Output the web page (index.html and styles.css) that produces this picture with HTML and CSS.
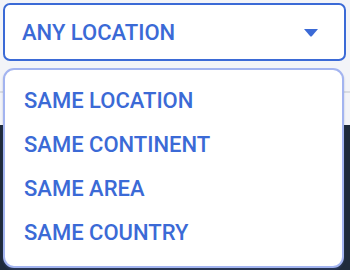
FILE: index.html
```html
<!DOCTYPE html>
<html lang="en">
<head>
    <meta charset="UTF-8">
    <meta name="viewport" content="width=device-width, initial-scale=1.0">
    <title>Location Filter</title>
    <link rel="stylesheet" href="styles.css">
</head>
<body>

    <div class="filter-wrap">
        <!-- Select trigger -->
        <button class="select-box">
            <span class="select-label">ANY LOCATION</span>
            <svg class="select-caret" width="14" height="8" viewBox="0 0 14 8">
                <path d="M0 0 H14 L7.8 7.2 Q7 8 6.2 7.2 Z" fill="#3b6ad6"/>
            </svg>
        </button>

        <!-- Options -->
        <ul class="option-list">
            <li class="option-item">SAME LOCATION</li>
            <li class="option-item">SAME CONTINENT</li>
            <li class="option-item">SAME AREA</li>
            <li class="option-item">SAME COUNTRY</li>
        </ul>
    </div>

</body>
</html>
```
FILE: styles.css
```css
/* Page backdrop behind the dropdown */
body {
    margin: 0;
    font-family: Roboto, "Liberation Sans", Arial, sans-serif;
    background: linear-gradient(#f3f4f8 0 91px, #d9dce2 91px 93px, #f3f4f8 93px 125px, #1f2b3b 125px);
    min-height: 270px;
}

.filter-wrap {
    padding: 3px 4px 0 3px;
}

.select-box {
    width: 100%;
    height: 58px;
    display: flex;
    align-items: center;
    justify-content: space-between;
    padding: 0 26px 0 17px;
    background: #fff;
    border: 2px solid #3b6ad6;
    border-radius: 7px;
    font-family: inherit;
    cursor: pointer;
    box-sizing: border-box;
}

.select-label {
    font-size: 22px;
    font-weight: 500;
    color: #3b6ad6;
}

.select-caret {
    margin-top: 1px;
}

.option-list {
    list-style: none;
    margin: 7px 2px 0 0;
    padding: 9px 0 12px 0;
    height: 200px;
    box-sizing: border-box;
    background: #fff;
    border: 2px solid #a3b4f0;
    border-radius: 11px;
    box-shadow: 0 2px 2px rgba(60, 80, 140, 0.35);
}

.option-item {
    height: 44px;
    line-height: 44px;
    padding-left: 19px;
    font-size: 22px;
    font-weight: 500;
    color: #3b6ad6;
}
```
